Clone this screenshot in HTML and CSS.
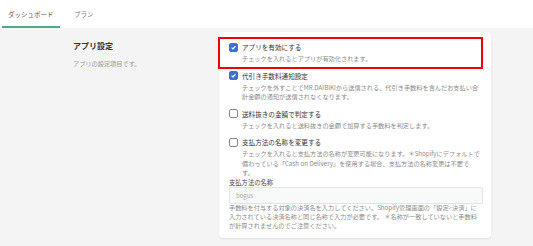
FILE: index.html
```html
<!DOCTYPE html>
<html lang="ja">
<head>
    <meta charset="UTF-8">
    <meta name="viewport" content="width=device-width, initial-scale=1.0">
    <title>ダッシュボード</title>
    <link rel="stylesheet" href="styles.css">
</head>
<body>
    <nav class="tabs">
        <a href="#" class="tab active">ダッシュボード</a>
        <a href="#" class="tab">プラン</a>
    </nav>

    <main class="page">
        <section class="layout">
            <div class="section-info">
                <h2>アプリ設定</h2>
                <p>アプリの設定項目です。</p>
            </div>

            <div class="card">
                <div class="highlight"></div>

                <label class="option">
                    <span class="check on"><svg viewBox="0 0 10 10"><path d="M2.3 5.2 L4.2 7 L7.8 3.2" /></svg></span>
                    <span class="option-body">
                        <span class="option-title">アプリを有効にする</span>
                        <span class="option-help">チェックを入れるとアプリが有効化されます。</span>
                    </span>
                </label>

                <label class="option">
                    <span class="check on"><svg viewBox="0 0 10 10"><path d="M2.3 5.2 L4.2 7 L7.8 3.2" /></svg></span>
                    <span class="option-body">
                        <span class="option-title">代引き手数料通知設定</span>
                        <span class="option-help">チェックを外すことでMR.DAIBIKIから送信される、代引き手数料を含んだお支払い合計金額の通知が送信されなくなります。</span>
                    </span>
                </label>

                <label class="option">
                    <span class="check"></span>
                    <span class="option-body">
                        <span class="option-title">送料抜きの金額で判定する</span>
                        <span class="option-help">チェックを入れると送料抜きの金額で加算する手数料を判定します。</span>
                    </span>
                </label>

                <label class="option">
                    <span class="check"></span>
                    <span class="option-body">
                        <span class="option-title">支払方法の名称を変更する</span>
                        <span class="option-help">チェックを入れると支払方法の名称が変更可能になります。＊Shopifyにデフォルトで備わっている「Cash on Delivery」を使用する場合、支払方法の名称変更は不要です。</span>
                    </span>
                </label>

                <div class="field">
                    <div class="field-label">支払方法の名称</div>
                    <input class="field-input" type="text" placeholder="bogus">
                    <p class="field-help">手数料を付与する対象の決済名を入力してください。Shopify管理画面の「設定&gt;決済」に入力されている決済名称と同じ名称で入力が必要です。 ＊名称が一致していないと手数料が計算されませんのでご注意ください。</p>
                </div>
            </div>
        </section>
        <hr class="divider">
    </main>
</body>
</html>
```

FILE: styles.css
```css
body { margin: 0; background-color: #f4f4f4; font-family: "Noto Sans CJK JP", "Noto Sans", sans-serif; color: #333; }

.tabs { display: flex; height: 28px; background-color: #fff; padding-left: 2px; }
.tab { display: block; box-sizing: border-box; height: 28px; padding: 0 6px; line-height: 28px; font-size: 6.5px; color: #555; text-decoration: none; }
.tab.active { width: 58px; border-bottom: 2px solid #4fa886; }
.tab + .tab { margin-left: 8px; color: #777; }

.page { padding: 4px 0 0 73px; }
.layout { display: flex; align-items: flex-start; }

.section-info { width: 146px; padding-top: 8px; }
.section-info h2 { margin: 0; font-size: 8px; font-weight: 700; color: #333; line-height: 11px; }
.section-info p { margin: 8px 0 0; font-size: 6.2px; color: #999; }

.card { position: relative; display: flex; flex-direction: column; width: 272px; box-sizing: border-box; background-color: #fff; border-radius: 4px; padding: 9px 11px 8px 10px; box-shadow: 0 1px 2px rgba(0, 0, 0, 0.08); }
.highlight { position: absolute; left: -1px; top: 5px; width: 265px; height: 32px; box-sizing: border-box; border: 2px solid #f10000; }

.option { display: flex; align-items: flex-start; margin-bottom: 6px; }
.check { flex: none; width: 9px; height: 9px; box-sizing: border-box; border: 1px solid #888; border-radius: 2px; background-color: #fff; margin-right: 4px; margin-top: 1.5px; }
.check.on { background-color: #3a6fd3; border-color: #3a6fd3; }
.check svg { display: block; width: 7px; height: 7px; fill: none; stroke: #fff; stroke-width: 1.6; }

.option-body { display: flex; flex-direction: column; }
.option-title { font-size: 6.6px; line-height: 12px; color: #333; }
.option-help { margin-top: 1px; font-size: 6.2px; line-height: 9.5px; color: #8a8a8a; }

.field { margin-top: -6px; }
.field-label { font-size: 6.3px; line-height: 9px; color: #444; }
.field-input { display: block; box-sizing: border-box; width: 254px; height: 17px; margin: 0; padding: 0 6px; border: 1px solid #e2e4e4; border-radius: 2px; background-color: #f8f9f9; font-family: inherit; font-size: 6px; color: #999; }
.field-input::placeholder { color: #aaa; }
.field-help { margin: -1px 0 0; font-size: 6.2px; line-height: 9.3px; color: #8a8a8a; }

.divider { width: 410px; margin: 8px 0 0; border: 0; border-top: 1px solid #e4e4e4; }
```
